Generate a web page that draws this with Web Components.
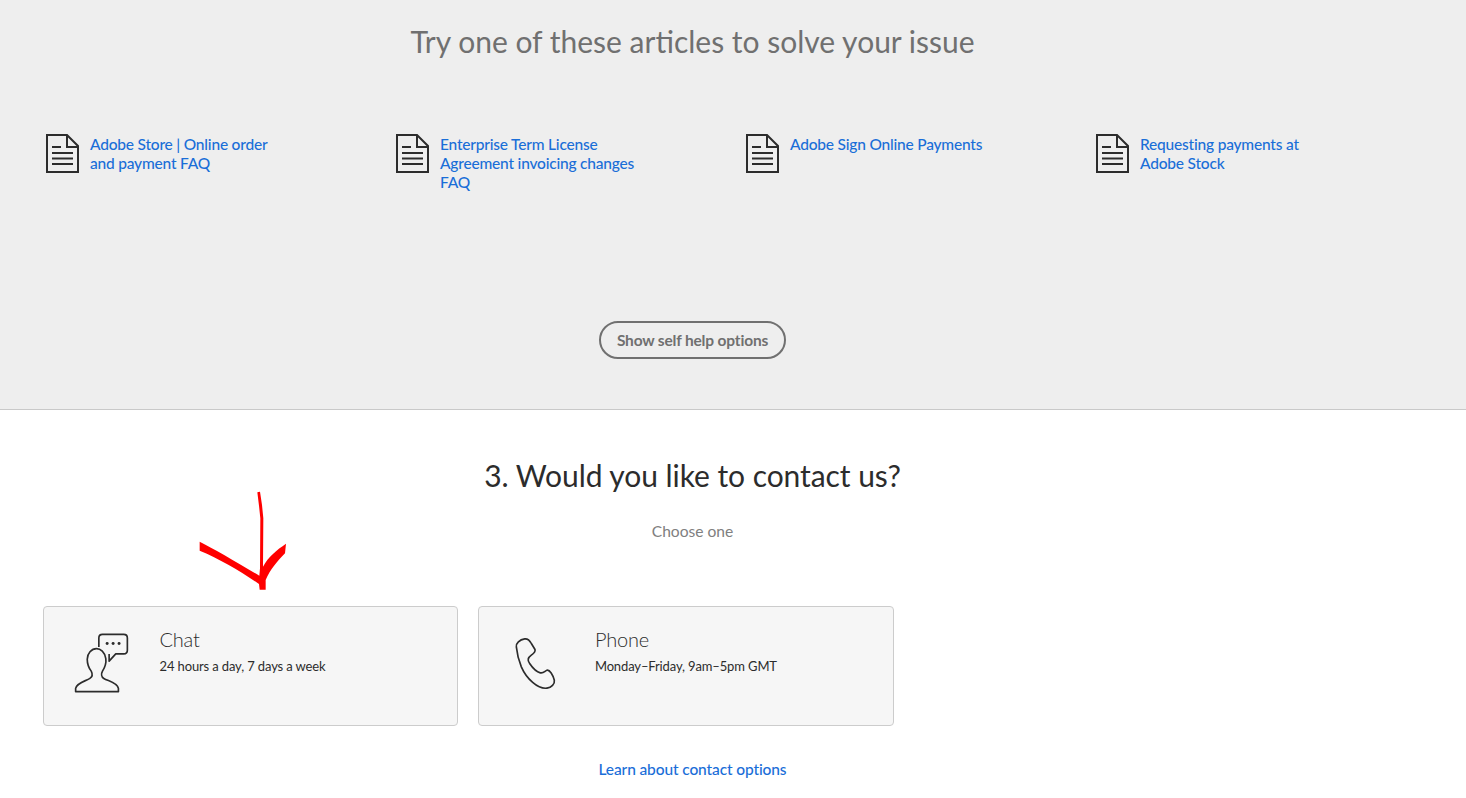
<!DOCTYPE html>
<html lang="en">
<head>
<meta charset="utf-8">
<title>Contact us</title>
<style>
  html, body { margin: 0; padding: 0; background: #fff; }
  body { font-family: 'Lato', 'Open Sans', sans-serif; overflow: hidden; height: 798px; position: relative; }
</style>
</head>
<body>
<self-help-panel heading="Try one of these articles to solve your issue" button="Show self help options">
  <article-link>Adobe Store | Online order and payment FAQ</article-link>
  <article-link>Enterprise Term License Agreement invoicing changes FAQ</article-link>
  <article-link>Adobe Sign Online Payments</article-link>
  <article-link>Requesting payments at Adobe Stock</article-link>
</self-help-panel>
<contact-panel heading="3. Would you like to contact us?" hint="Choose one" link="Learn about contact options">
  <contact-card icon="chat" title="Chat" detail="24 hours a day, 7 days a week"></contact-card>
  <contact-card icon="phone" title="Phone" detail="Monday–Friday, 9am–5pm GMT"></contact-card>
</contact-panel>
<red-arrow></red-arrow>
<script>
class SelfHelpPanel extends HTMLElement {
  constructor() {
    super();
    this.attachShadow({ mode: 'open' });
  }
  connectedCallback() {
    this.shadowRoot.innerHTML = `
      <style>
        :host { display: block; box-sizing: border-box; height: 410px; background: #eeeeee; border-bottom: 1px solid #c9c9c9; }
        .wrap { width: 1385px; display: flex; flex-direction: column; align-items: center; }
        h2 { margin: 21px 0 0; font-size: 30px; line-height: 40px; font-weight: 400; color: #707070; white-space: nowrap; }
        .grid { align-self: stretch; display: grid; grid-template-columns: repeat(4, 350px); margin: 73px 0 0 46px; height: 187px; }
        button { font: inherit; font-size: 15.500px; letter-spacing: -0.170px; font-weight: 700; color: #707070; background: transparent; border: 2px solid #707070; border-radius: 19px; width: 187px; height: 38px; padding: 0 0 1px; }
      </style>
      <div class="wrap">
        <h2>${this.getAttribute('heading')}</h2>
        <div class="grid"><slot></slot></div>
        <button>${this.getAttribute('button')}</button>
      </div>`;
  }
}
customElements.define('self-help-panel', SelfHelpPanel);

class ArticleLink extends HTMLElement {
  constructor() {
    super();
    this.attachShadow({ mode: 'open' });
    this.shadowRoot.innerHTML = `
      <style>
        :host { display: flex; align-items: flex-start; gap: 11px; }
        svg { flex: none; width: 33px; height: 39px; }
        a { width: 200px; margin-top: 1px; font-size: 15.500px; letter-spacing: -0.200px; line-height: 19px; font-weight: 500; color: #1a6ed8; text-decoration: none; }
      </style>
      <svg viewBox="0 0 33 39" fill="none" stroke="#2c2c2c" stroke-width="2">
        <path d="M1 1H21L32 12V38H1Z"/>
        <path d="M21 1V13H32"/>
        <path d="M6 13H15M6 19H27M6 24.500H27M6 30H27"/>
      </svg>
      <a href="#"><slot></slot></a>`;
  }
}
customElements.define('article-link', ArticleLink);

class ContactPanel extends HTMLElement {
  constructor() {
    super();
    this.attachShadow({ mode: 'open' });
  }
  connectedCallback() {
    this.shadowRoot.innerHTML = `
      <style>
        :host { display: block; }
        .wrap { width: 1385px; display: flex; flex-direction: column; align-items: center; }
        h2 { margin: 45px 0 0; font-size: 30px; letter-spacing: -0.060px; line-height: 40px; font-weight: 400; color: #2c2c2c; white-space: nowrap; }
        p { margin: 26px 0 0; font-size: 15.600px; line-height: 20px; font-weight: 400; color: #808080; }
        .cards { align-self: stretch; display: flex; gap: 20px; margin: 65px 0 0 43px; }
        a { margin-top: 33px; font-size: 15.500px; letter-spacing: -0.120px; line-height: 20px; font-weight: 500; color: #1a6ed8; text-decoration: none; }
      </style>
      <div class="wrap">
        <h2>${this.getAttribute('heading')}</h2>
        <p>${this.getAttribute('hint')}</p>
        <div class="cards"><slot></slot></div>
        <a href="#">${this.getAttribute('link')}</a>
      </div>`;
  }
}
customElements.define('contact-panel', ContactPanel);

const CONTACT_ICONS = {
  chat: `<svg viewBox="130 110 170 190" width="57" height="63" fill="none" stroke="#2c2c2c" stroke-width="5" stroke-linejoin="round">
      <path d="M137 290H266V280C262 262 235 258 222 250C214 245 214 235 218 228C226 215 230 205 228 190C225 170 212 160 200 160C185 160 172 175 172 192C172 208 178 220 184 228C188 236 188 245 180 250C168 258 142 262 137 280Z"/>
      <path d="M207 155V128Q207 117 218 117H282Q293 117 293 128V165Q293 176 282 176H258L238 198V176"/>
      <circle cx="232" cy="145" r="4.500" fill="#2c2c2c" stroke="none"/>
      <circle cx="250" cy="145" r="4.500" fill="#2c2c2c" stroke="none"/>
      <circle cx="268" cy="145" r="4.500" fill="#2c2c2c" stroke="none"/>
    </svg>`,
  phone: `<svg viewBox="130 115 135 170" width="45" height="57" fill="none" stroke="#2c2c2c" stroke-width="5" stroke-linejoin="round">
      <path d="M140 150C138 140 150 128 165 126C175 125 180 130 185 140L196 158C198 165 192 170 185 175C175 182 172 190 180 200C190 215 200 225 212 228C222 230 226 222 232 220C240 218 250 235 254 250C256 262 245 272 232 274C205 278 170 245 155 210C147 190 142 170 140 150Z"/>
    </svg>`
};

class ContactCard extends HTMLElement {
  constructor() {
    super();
    this.attachShadow({ mode: 'open' });
  }
  connectedCallback() {
    const icon = this.getAttribute('icon');
    this.shadowRoot.innerHTML = `
      <style>
        :host { display: block; box-sizing: border-box; width: 415.400px; height: 120px; background: #f6f6f6; border: 1px solid #cccccc; border-radius: 4px; }
        .row { display: flex; height: 100%; }
        .icon { width: 115.500px; flex: none; box-sizing: border-box; padding: 25px 0 0 29px; }
        .icon.phone { padding: 28px 0 0 34px; }
        svg { display: block; }
        h3 { margin: 20px 0 0; font-size: 20px; letter-spacing: -0.200px; line-height: 24px; font-weight: 300; color: #2c2c2c; }
        p { margin: 5px 0 0; font-size: 13px; letter-spacing: -0.130px; line-height: 20px; color: #2c2c2c; }
      </style>
      <div class="row">
        <div class="icon ${icon}">${CONTACT_ICONS[icon]}</div>
        <div>
          <h3>${this.getAttribute('title')}</h3>
          <p>${this.getAttribute('detail')}</p>
        </div>
      </div>`;
  }
}
customElements.define('contact-card', ContactCard);

// hand drawn annotation on top of the page
class RedArrow extends HTMLElement {
  constructor() {
    super();
    this.attachShadow({ mode: 'open' });
    this.shadowRoot.innerHTML = `
      <style>
        :host { position: absolute; left: 190px; top: 485px; width: 110px; height: 110px; }
        svg { display: block; }
      </style>
      <svg viewBox="0 0 330 330" width="110" height="110">
        <path fill="#ff0000" d="M29 170C70 190 140 232 208 272L210 250L211 100L207 62L202 22L210 20L216 60L220 100L219 245C235 215 260 195 288 176L285 205C262 228 240 255 227 285L227 314H209L207 297C150 258 90 222 29 197Z"/>
      </svg>`;
  }
}
customElements.define('red-arrow', RedArrow);
</script>
</body>
</html>
